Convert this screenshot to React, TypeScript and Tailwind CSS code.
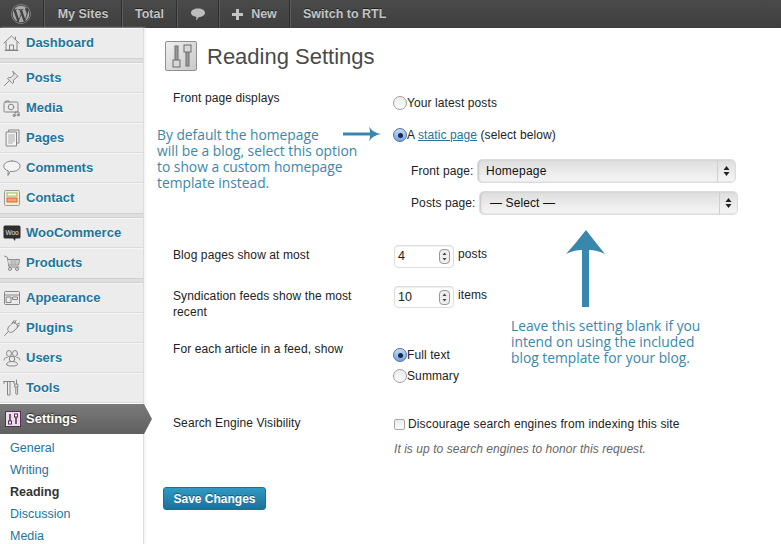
import React from "react";
import { FaWordpress } from "react-icons/fa";

const S = { fill: "none", stroke: "#868686", strokeWidth: 1, strokeLinejoin: "round" as const, strokeLinecap: "round" as const };
function Ico({ children }: { children: React.ReactNode }) {
  return <svg width="18" height="18" viewBox="0 0 18 18" className="shrink-0">{children}</svg>;
}
const Home = () => <Ico><g {...S}><path d="M1 9 8.500 2 16 9" /><path d="M3 8v8h11V8" /><path d="M6.500 16v-5h4v5" /><path d="M12.500 3v2.500" /><path d="M2 16.500h13" /></g></Ico>;
const Pin = () => <Ico><g {...S}><path d="M10 2.500l5 5-1.500.8-3 3 0 2.500-1 .8-5-5 .9-1 2.500 0 2.800-3z" fill="#e4e4e4" /><path d="M6 12 1.500 16.500" /></g></Ico>;
const Media = () => <Ico><g {...S}><rect x="1" y="3" width="14" height="10" rx="1.200" /><circle cx="8" cy="8" r="2.800" /><path d="M3 3V2h3v1" /><path d="M12 17v-4h4v3.500" /><circle cx="11" cy="16.500" r="1" /><circle cx="15" cy="16" r="1" /></g></Ico>;
const Pages = () => <Ico><g {...S}><rect x="6" y="1" width="10" height="13" fill="#eee" /><rect x="3.500" y="3" width="10" height="14" fill="#f4f4f4" /><path d="M5.500 6h6M5.500 8h6M5.500 10h6M5.500 12h6M5.500 14h4" stroke="#aaa" /></g></Ico>;
const Comment = () => <Ico><g {...S}><path d="M9 2c4.500 0 8 2.200 8 5.200S13.500 12.500 9 12.500c-.7 0-1 0-1.800-.1L5 16.500l.2-4.700C2.500 11 .8 9.300.8 7.200.8 4.200 4.500 2 9 2z" fill="#f3f3f3" /></g></Ico>;
const Contact = () => <Ico><rect x="1.500" y="1.500" width="15" height="15" rx="1" fill="#f4f0d0" stroke="#999" /><rect x="4" y="4" width="10" height="3" fill="#fff" stroke="#9fb25f" /><rect x="4" y="9" width="10" height="4" fill="#f6a37a" stroke="#d9653a" /></Ico>;
const Woo = () => <svg width="18" height="18" viewBox="0 0 18 18" className="shrink-0"><path d="M2 1.500h14a1.500 1.500 0 0 1 1.500 1.500v10a1.500 1.500 0 0 1-1.500 1.500h-3.500l-.5 2.500-2-2.500H2A1.500 1.500 0 0 1 .5 13V3A1.500 1.500 0 0 1 2 1.500z" fill="#2e2e2e" /><text x="9" y="10.500" textAnchor="middle" fontSize="6.500" fill="#e8e8e8" fontFamily="Liberation Sans, sans-serif">Woo</text></svg>;
const Cart = () => <Ico><g {...S}><path d="M1.500 2 4.500 3.500 6 13h10" /><path d="M5 5.500h11.500L15.500 11H6" fill="#e6e6e6" /><path d="M7 7h8M7 9h8M9 5.500V11M12 5.500V11" stroke="#aaa" /><circle cx="7" cy="15" r="1.500" /><circle cx="14" cy="15" r="1.500" /></g></Ico>;
const Appear = () => <Ico><g {...S}><rect x="1.500" y="2.500" width="15" height="13" rx="1" /><path d="M1.500 6h15" /><rect x="3.500" y="8" width="4.500" height="5.500" /><rect x="10" y="8" width="4.500" height="2.500" /></g></Ico>;
const Plug = () => <Ico><g {...S}><path d="M11 3 8 5.500 5.500 8c-1 1.500-1 3.500 0 4.500s3 1.200 4.500.2L15 8z" fill="#ececec" /><path d="M11 1.500l-1.800 2.600M16.500 6l-2.700 1.800M13 1.500l-1.500 3M16.500 4l-3 1.500" /><path d="M5.500 12.500 1.500 16.500" /></g></Ico>;
const Users = () => <Ico><g {...S}><ellipse cx="6" cy="4.500" rx="2.500" ry="3" /><ellipse cx="12" cy="4.500" rx="2.500" ry="3" /><ellipse cx="9" cy="10" rx="2.700" ry="2.800" fill="#ececec" /><path d="M3.500 15.500c0-2 2.500-3 5.500-3s5.500 1 5.500 3c0 1-2 1.500-5.500 1.500s-5.500-.5-5.500-1.500z" fill="#ececec" /><path d="M1 11c0-1.500 1-2.500 3-2.500M17 11c0-1.500-1-2.500-3-2.500" /></g></Ico>;
const Tools = () => <Ico><g {...S}><path d="M1 2.500h10M1 2.500v2M11 2.500v2" /><path d="M4.500 3v13h2.500V3" /><path d="M13.500 1v4M12.300 5h2.400l.3 3h-3zM12.800 8.500v6.500a1 1 0 0 0 1.800 0V8.500" /></g></Ico>;
const SettingsIco = () => <svg width="16" height="16" viewBox="0 0 16 16" className="shrink-0"><rect x=".5" y=".5" width="15" height="15" fill="#e9dfe8" stroke="#5b2a56" /><path d="M5 3v7M11 6v7" stroke="#5b2a56" strokeWidth="1.500" /><rect x="3.500" y="10" width="3" height="3" fill="#fff" stroke="#5b2a56" /><rect x="9.500" y="3" width="3" height="3" fill="#fff" stroke="#5b2a56" /></svg>;

function Item({ icon, label, noBorder }: { icon: React.ReactNode; label: string; noBorder?: boolean }) {
  return (
    <div className={`h-[30px] flex items-center pl-[3px] gap-[5px] border-t border-t-[#f6f6f6] border-b pb-[1px] ${noBorder ? "border-b-[#ececec]" : "border-b-[#dcdcdc]"}`}>
      <span className="w-[18px] flex justify-center">{icon}</span>
      <span className="font-bold text-[13px] text-[#21759b] [text-shadow:0_1px_0_#fff]">{label}</span>
    </div>
  );
}
const Sep = () => <div className="h-[5px] bg-[#dfdfdf] border-y border-y-[#d0d0d0]" />;

function Sub({ children, cur }: { children: React.ReactNode; cur?: boolean }) {
  return <div className={`h-[22px] flex items-center pl-[10px] text-[12.500px] ${cur ? "font-bold text-[#333]" : "text-[#21759b]"}`}>{children}</div>;
}

function Radio({ on }: { on?: boolean }) {
  return (
    <span className={`w-[14px] h-[14px] rounded-full border flex items-center justify-center shrink-0 ${on ? "border-[#5d6f91] bg-[linear-gradient(#c3daf8,#6fa6ea)]" : "border-[#a0a0a0] bg-[linear-gradient(#ececec,#fafafa)]"}`}>
      {on && <span className="w-[5px] h-[5px] rounded-full bg-[#1c2a44]" />}
    </span>
  );
}

function Select({ text, pad }: { text: string; pad: string }) {
  return (
    <div className="w-[259px] flex items-stretch rounded-[5px] border border-[#dcdcdc] bg-[linear-gradient(#dedede,#f6f6f6)] shadow-[inset_1px_0_2px_#c4c4c4]">
      <span className={`flex-1 flex items-center text-[12px] text-[#111] ${pad}`}>{text}</span>
      <span className="w-[18px] border-l border-l-[#cfcfcf] flex items-center justify-center">
        <svg width="7" height="12" viewBox="0 0 7 12"><path d="M3.500 1 6.500 5h-6zM3.500 11 .5 7h6z" fill="#222" /></svg>
      </span>
    </div>
  );
}

function NumInput({ v, h }: { v: string; h: string }) {
  return (
    <div className={`w-[60px] ${h} rounded-[4px] border border-[#dddddd] bg-white flex items-center shadow-[inset_0_1px_1px_#eee]`}>
      <span className="flex-1 pl-[3px] text-[12.500px] text-[#222]">{v}</span>
      <span className="w-[11px] h-[15px] mr-[3px] rounded-[4px] border border-[#999] bg-[#eee] flex items-center justify-center">
        <svg width="5" height="11" viewBox="0 0 5 11"><path d="M2.500 1.500 4.500 4H.5zM2.500 9.500.5 7h4z" fill="#444" /></svg>
      </span>
    </div>
  );
}

const Label = ({ children, cls = "" }: { children: React.ReactNode; cls?: string }) => (
  <div className={`w-[220px] pr-[30px] text-[12px] leading-[16px] tracking-[0.1px] text-[#222] shrink-0 ${cls}`}>{children}</div>
);

export default function App() {
  return (
    <div className="w-[781px] h-[544px] overflow-hidden flex flex-col bg-white font-['Liberation_Sans',sans-serif]">
      <header className="h-[28px] shrink-0 flex items-stretch bg-[linear-gradient(#4a4a4a,#3f3f3f)] text-[#c4c4c4] text-[12.500px] font-bold [text-shadow:0_-1px_0_#222]">
        <div className="w-[44px] flex items-center justify-center pr-[2px] border-r border-r-[#2f2f2f]"><FaWordpress size={20} color="#a8a8a8" /></div>
        <div className="w-[78px] flex items-center justify-center border-l border-l-[#5a5a5a] border-r border-r-[#2f2f2f]">My Sites</div>
        <div className="w-[55px] flex items-center justify-center border-l border-l-[#5a5a5a] border-r border-r-[#2f2f2f]">Total</div>
        <div className="w-[42px] flex items-center justify-center border-l border-l-[#5a5a5a] border-r border-r-[#2f2f2f]">
          <svg width="16" height="15" viewBox="0 0 16 15"><path d="M8 1.500c4 0 7 1.800 7 4.300s-3 4.300-6 4.300l-3 3.400.5-3.600C3 9.500 1 7.900 1 5.800 1 3.300 4 1.500 8 1.500z" fill="#bdbdbd" /></svg>
        </div>
        <div className="w-[71px] flex items-center justify-center gap-[8px] border-l border-l-[#5a5a5a] border-r border-r-[#2f2f2f]">
          <svg width="11" height="11" viewBox="0 0 11 11"><path d="M4 0h3v4h4v3H7v4H4V7H0V4h4z" fill="#c4c4c4" /></svg>New
        </div>
        <div className="pl-[12px] flex items-center border-l border-l-[#5a5a5a]">Switch to RTL</div>
      </header>
      <div className="flex-1 flex min-h-0">
        <aside className="w-[144px] shrink-0 border-r border-r-[#dcdcdc] bg-white shadow-[1px_0_2px_#eee] relative">
          <div className="bg-[#ececec]">
            <Item icon={<Home />} label="Dashboard" noBorder />
            <Sep />
            <Item icon={<Pin />} label="Posts" />
            <Item icon={<Media />} label="Media" />
            <Item icon={<Pages />} label="Pages" />
            <Item icon={<Comment />} label="Comments" />
            <Item icon={<Contact />} label="Contact" noBorder />
            <Sep />
            <Item icon={<Woo />} label="WooCommerce" />
            <Item icon={<Cart />} label="Products" noBorder />
            <Sep />
            <Item icon={<Appear />} label="Appearance" />
            <Item icon={<Plug />} label="Plugins" />
            <Item icon={<Users />} label="Users" />
            <Item icon={<Tools />} label="Tools" />
          </div>
          <div className="relative h-[30px] mt-[1px] pb-[1px] flex items-center pl-[5px] gap-[5px] bg-[linear-gradient(#7a7a7a,#606060)] w-[144px]">
            <SettingsIco />
            <span className="font-bold text-[13px] text-white [text-shadow:0_-1px_0_#333,0_0_3px_#333]">Settings</span>
            <svg width="8" height="30" viewBox="0 0 8 30" className="absolute left-[144px] top-0"><defs><linearGradient id="g" x1="0" y1="0" x2="0" y2="1"><stop offset="0" stopColor="#7a7a7a" /><stop offset="1" stopColor="#606060" /></linearGradient></defs><path d="M0 0 8 15 0 30z" fill="url(#g)" /></svg>
          </div>
          <div className="pt-[3px]">
            <Sub>General</Sub>
            <Sub>Writing</Sub>
            <Sub cur>Reading</Sub>
            <Sub>Discussion</Sub>
            <Sub>Media</Sub>
          </div>
        </aside>
        <main className="relative flex-1 pl-[19px]">
          <div className="mt-[13px] ml-[2px] flex items-center gap-[10px] h-[30px]">
            <div className="w-[32px] h-[30px] rounded-[2px] border border-[#8f8f8f] bg-[linear-gradient(135deg,#efefef,#c9c9c9)] flex items-center justify-center">
              <svg width="26" height="26" viewBox="0 0 26 26"><g fill="#9a9a9a" stroke="#6d6d6d"><rect x="7" y="3" width="3" height="15" /><rect x="5" y="17" width="7" height="7" fill="#d8d8d8" /><rect x="18" y="8" width="3" height="15" /><rect x="16" y="2" width="7" height="7" fill="#d8d8d8" /></g></svg>
            </div>
            <h1 className="text-[22px] text-[#4a4a4a] leading-none mt-[2px]">Reading Settings</h1>
          </div>

          <div className="pl-[10px]">
            <div className="flex mt-[19px]">
              <Label>Front page displays</Label>
              <div className="text-[12px] tracking-[0.1px] text-[#222]">
                <div className="mt-[5px] h-[16px] flex items-center"><Radio /><span>Your latest posts</span></div>
                <div className="mt-[16px] h-[16px] flex items-center"><Radio on /><span>A <span className="underline text-[#21759b]">static page</span> (select below)</span></div>
                <div className="mt-[16px] ml-[18px] flex h-[24px]">
                  <span className="w-[66px] flex items-center">Front page:</span>
                  <Select text="Homepage" pad="pl-[8px] tracking-[0.25px]" />
                </div>
                <div className="mt-[8px] ml-[18px] flex h-[24px]">
                  <span className="w-[68px] flex items-center">Posts page:</span>
                  <Select text="— Select —" pad="pl-[10px]" />
                </div>
              </div>
            </div>

            <div className="flex mt-[30px]">
              <Label cls="mt-[2px]">Blog pages show at most</Label>
              <div className="flex gap-[4px] ml-[1px] text-[12px] tracking-[0.1px] text-[#222]">
                <NumInput v="4" h="h-[23px]" /><span className="leading-[16px] mt-[1px]">posts</span>
              </div>
            </div>

            <div className="flex mt-[18px]">
              <Label cls="mt-[2px]">Syndication feeds show the most recent</Label>
              <div className="flex gap-[4px] ml-[1px] h-[22px] text-[12px] tracking-[0.1px] text-[#222]">
                <NumInput v="10" h="h-[22px]" /><span className="leading-[16px] mt-[1px]">items</span>
              </div>
            </div>

            <div className="flex mt-[21px]">
              <Label>For each article in a feed, show</Label>
              <div className="mt-[6px] text-[12px] tracking-[0.1px] text-[#222]">
                <div className="h-[16px] flex items-center"><Radio on /><span>Full text</span></div>
                <div className="mt-[5px] h-[16px] flex items-center"><Radio /><span>Summary</span></div>
              </div>
            </div>

            <div className="flex mt-[31px]">
              <Label>Search Engine Visibility</Label>
              <div className="text-[12px] tracking-[0.14px] text-[#222] ml-[1px]">
                <div className="h-[16px] mt-[1px] flex items-center gap-[3px]">
                  <span className="w-[11px] h-[11px] rounded-[2px] border border-[#a8a8a8] bg-[linear-gradient(#ececec,#fafafa)]" />
                  <span>Discourage search engines from indexing this site</span>
                </div>
                <div className="mt-[8px] italic text-[#666] text-[12px] tracking-[0.05px]">It is up to search engines to honor this request.</div>
              </div>
            </div>
          </div>

          <button className="mt-[29px] w-[103px] h-[23px] rounded-[3px] border border-[#1f6f92] bg-[linear-gradient(#2f9ac3,#1d7199)] text-white text-[12px] font-bold [text-shadow:0_-1px_0_#145a7a]">Save Changes</button>

          <div className="absolute left-[13px] top-[99px] text-[13.800px] leading-[16px] text-[#3a87ad] font-['Open_Sans',sans-serif] whitespace-nowrap">
            By default the homepage<br />will be a blog, select this option<br />to show a custom homepage<br />template instead.
          </div>
          <svg className="absolute left-[199px] top-[98px]" width="40" height="16" viewBox="0 0 40 16"><path d="M0 6.500h30v3H0z" fill="#3a87ad" /><path d="M26 .5C28 4 32 7 38 8 32 9 28 12 26 15.500 27.500 11 27.500 5 26 .5z" fill="#3a87ad" /></svg>
          <svg className="absolute left-[422px] top-[202px]" width="40" height="78" viewBox="0 0 40 78"><path d="M20 0Q30 13 39 24 31 20 23 20V77H16V20Q8 20 0 24 10 13 20 0z" fill="#3a87ad" /></svg>
          <div className="absolute left-[367px] top-[290px] text-[13.800px] leading-[16px] text-[#3a87ad] font-['Open_Sans',sans-serif] whitespace-nowrap">
            Leave this setting blank if you<br />intend on using the included<br />blog template for your blog.
          </div>
        </main>
      </div>
    </div>
  );
}
